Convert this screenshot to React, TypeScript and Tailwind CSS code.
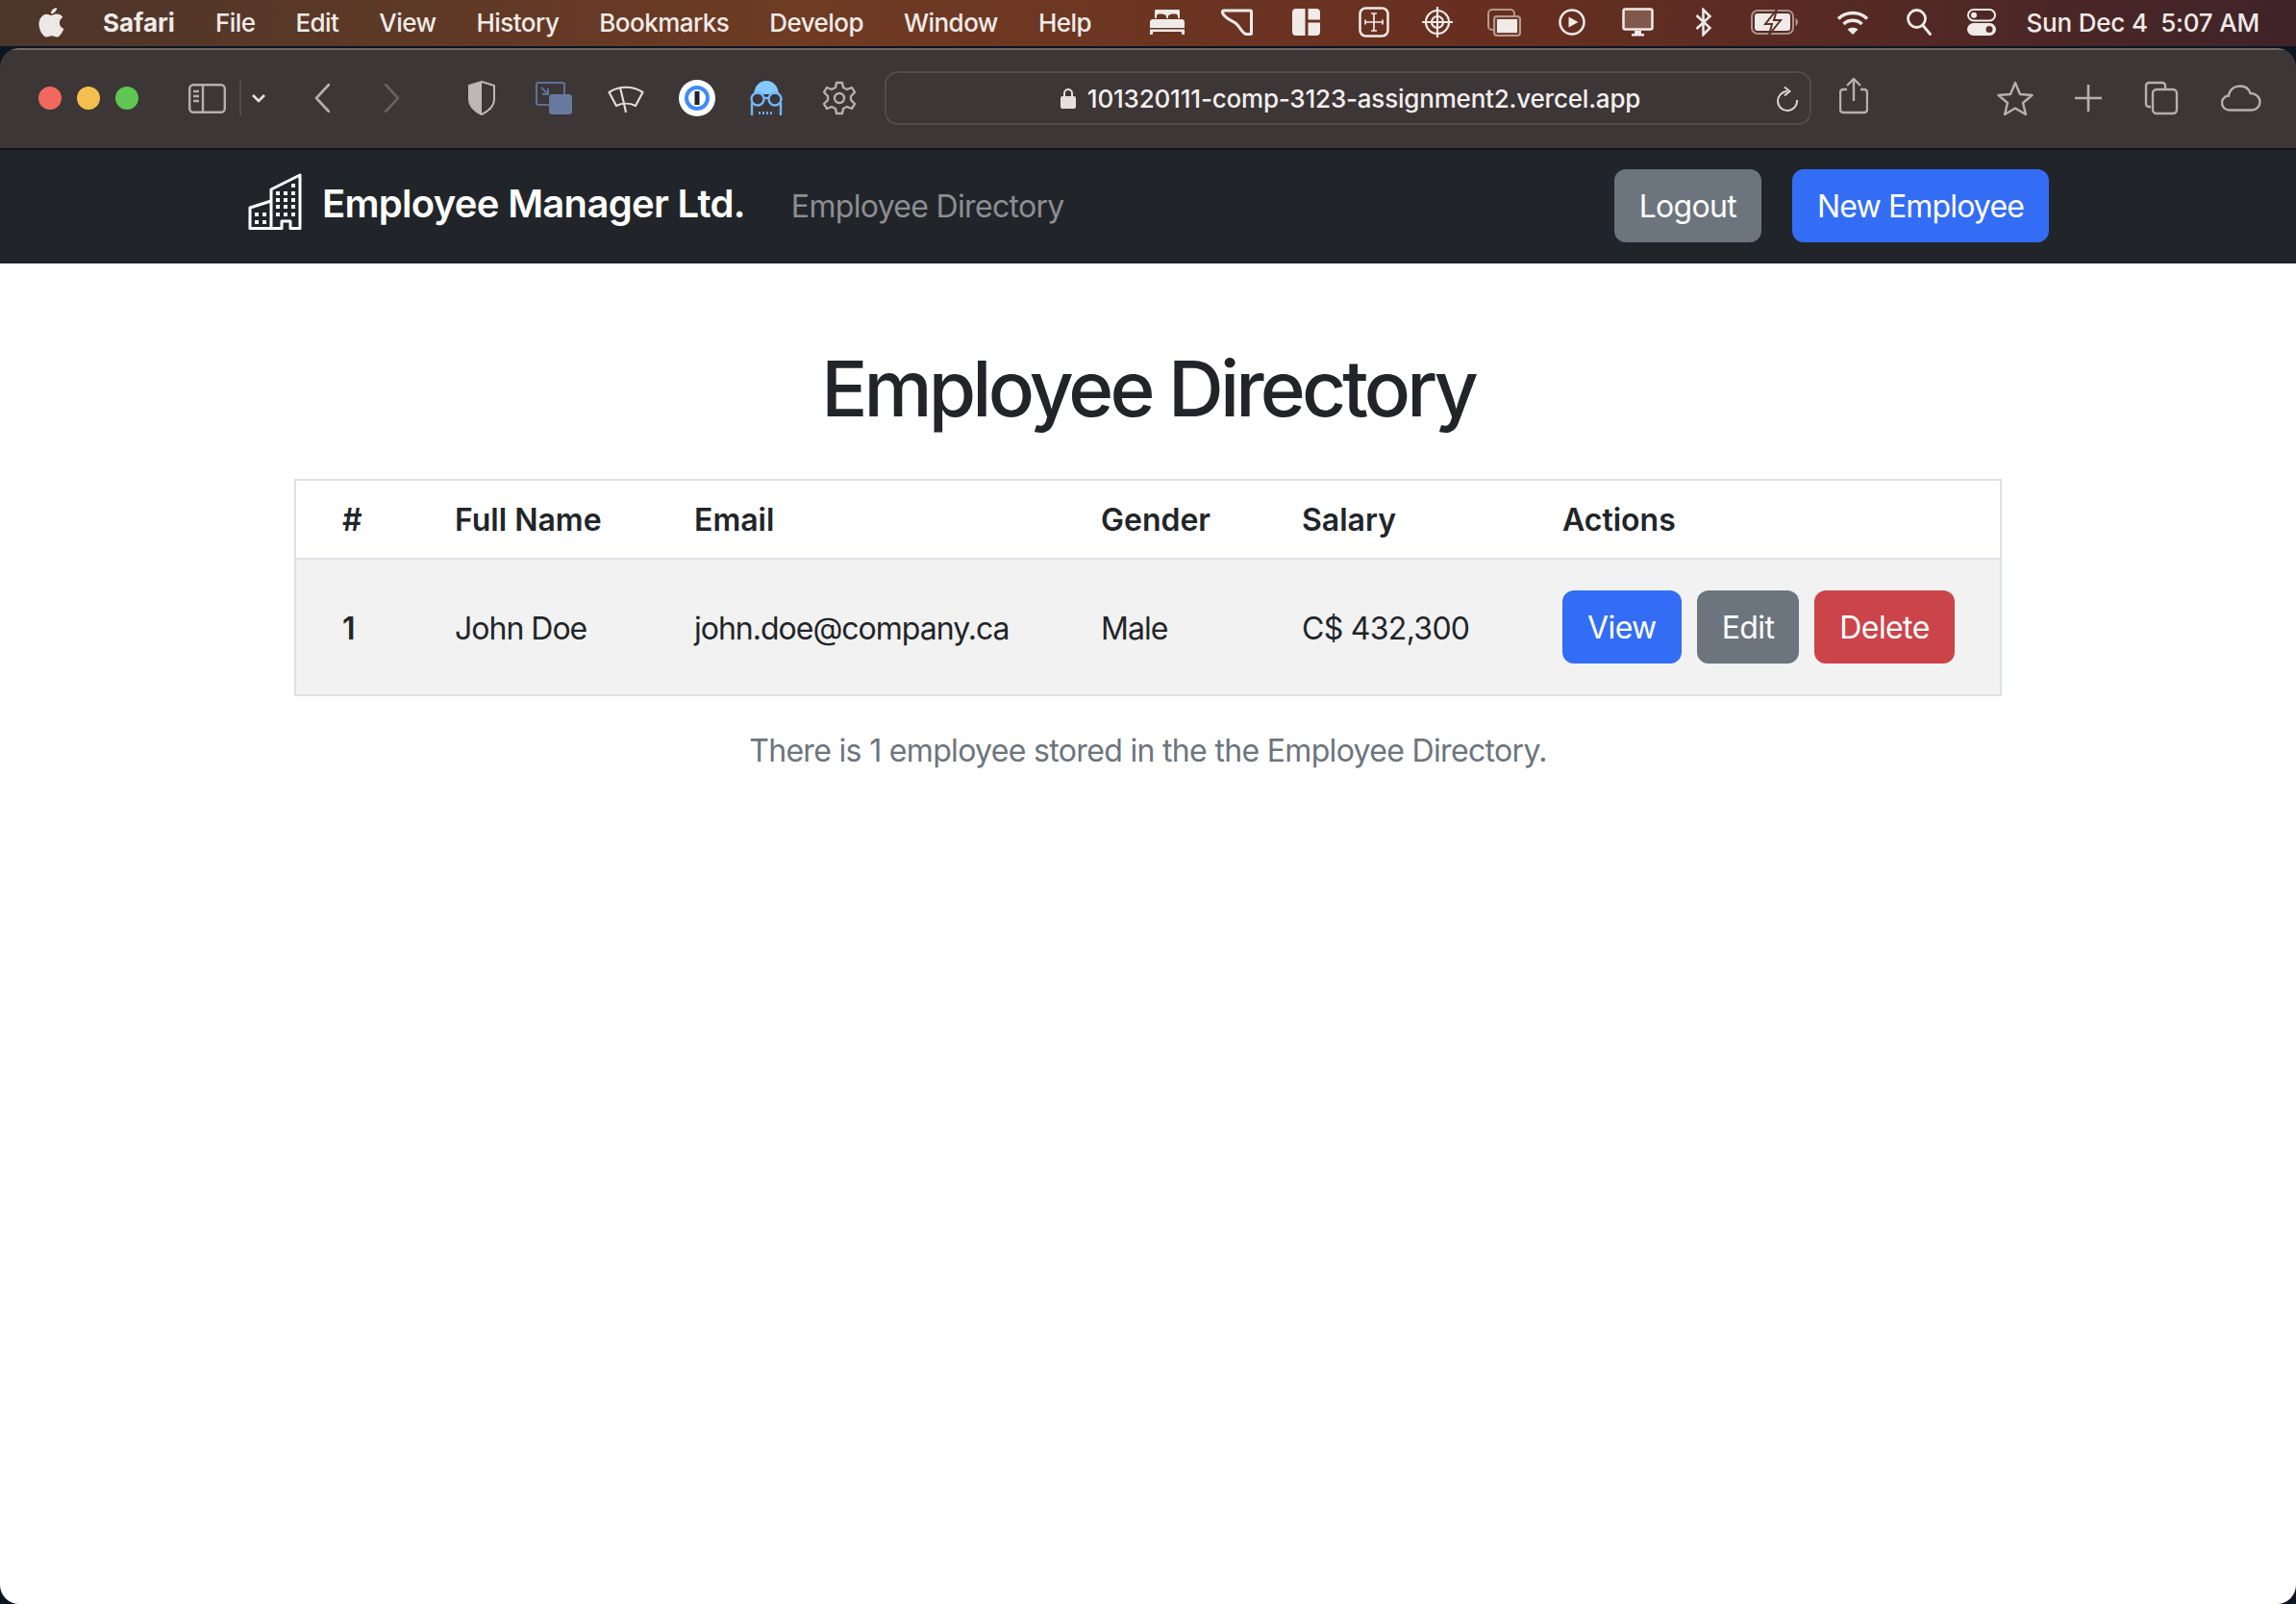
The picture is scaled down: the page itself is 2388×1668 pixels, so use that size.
const menuItems = ["File", "Edit", "View", "History", "Bookmarks", "Develop", "Window", "Help"];

function MenuBar() {
  return (
    <div className="flex h-[48px] shrink-0 items-center bg-[linear-gradient(90deg,#4c362a_0%,#6f3b23_35%,#682f20_65%,#3f2329_100%)] pb-[2px] pl-[40px] pr-[38px] text-[26px] text-[#f0ebe8]">
      <svg viewBox="0 0 27 32" className="h-[32px] w-[27px] shrink-0" fill="#ece8e6">
        <path d="M19 1c.3 3-2.6 6.500-6 6.300C12.700 4.200 15.800 1.200 19 1zM13.200 8.900c1.500 0 3-1.400 5.800-1.400 2.500 0 5 1.200 6.400 3.400-5.200 3-4.300 10 1 12-1.300 3.500-4.300 8.600-7.300 8.600-2 0-3-1.300-5.300-1.300s-3.600 1.300-5.400 1.300C4.700 31.500.5 24 .5 18.200.500 12 4.500 7.800 8.400 7.800c2 0 3.500 1.100 4.800 1.100z" />
      </svg>
      <span className="ml-[40px] font-bold">Safari</span>
      <div className="ml-[42px] flex gap-[42px] font-medium tracking-[-0.55px]">
        {menuItems.map((m) => (
          <span key={m}>{m}</span>
        ))}
      </div>
      <div className="ml-auto flex items-center">
        <div className="flex w-[40px] justify-center">
          <svg viewBox="0 0 36 26" className="h-[26px] w-[36px]" fill="#f0ebe8">
            <path d="M5 1.500C5 .7 5.700 0 6.500 0h23c.8 0 1.500.7 1.500 1.500V9h-2V6.500C29 5 27.500 4.500 25 4.500s-5 .5-6 2V9h-2V6.500c-1-1.500-3.500-2-6-2S7 5 7 6.500V9H5z" />
            <path d="M3 10h30c1.700 0 3 1.300 3 3v6H0v-6c0-1.700 1.300-3 3-3zM0 20.500h36V26h-2.500l-1-3h-29l-1 3H0z" />
          </svg>
        </div>
        <div className="ml-[33px] flex w-[40px] justify-center">
          <svg viewBox="0 0 33 28" className="h-[28px] w-[33px]" fill="none" stroke="#f0ebe8" strokeWidth="3" strokeLinejoin="round">
            <path d="M3 2h27.500a1 1 0 0 1 1 1v22.500a1 1 0 0 1-1 1H26C22 26 20 19 15 15 11 12 5 11 1.500 4.500 1 3 2 2 3 2z" />
          </svg>
        </div>
        <div className="ml-[32px] flex w-[40px] justify-center">
          <svg viewBox="0 0 29 28" className="h-[28px] w-[29px]" fill="#f0ebe8">
            <path d="M4 0h9.500v28H4a4 4 0 0 1-4-4V4a4 4 0 0 1 4-4zM16.500 0H25a4 4 0 0 1 4 4v7.500H16.500zM16.500 14.500H29V24a4 4 0 0 1-4 4h-8.500z" />
          </svg>
        </div>
        <div className="ml-[30px] flex w-[40px] justify-center">
          <svg viewBox="0 0 32 32" className="h-[32px] w-[32px]" fill="none" stroke="#f0ebe8">
            <rect x="1.500" y="1.500" width="29" height="29" rx="6" strokeWidth="2.500" />
            <path d="M16 7v18M13 7h6M13 25h6M7 13.500v5M7 16h18M25 13.500v5" strokeWidth="1.700" />
          </svg>
        </div>
        <div className="ml-[26px] flex w-[40px] justify-center">
          <svg viewBox="0 0 32 32" className="h-[32px] w-[32px]" fill="none" stroke="#f0ebe8" strokeWidth="2.200">
            <circle cx="16" cy="16" r="12" />
            <circle cx="16" cy="16" r="6" />
            <path d="M16 0v32M0 16h32" />
          </svg>
        </div>
        <div className="ml-[30px] flex w-[40px] justify-center">
          <svg viewBox="0 0 35 29" className="h-[29px] w-[35px]" fill="none">
            <rect x="1" y="1" width="27" height="21" rx="4" stroke="#b59a8f" strokeWidth="2" />
            <rect x="7" y="8" width="27" height="20" rx="3" fill="#704030" stroke="#b59a8f" strokeWidth="2" />
            <rect x="10" y="11" width="21" height="14" fill="#f0ebe8" />
          </svg>
        </div>
        <div className="ml-[30px] flex w-[40px] justify-center">
          <svg viewBox="0 0 28 28" className="h-[28px] w-[28px]">
            <circle cx="14" cy="14" r="12.500" fill="none" stroke="#f0ebe8" strokeWidth="2.500" />
            <path d="M10.500 8.500 20.500 14l-10 5.500z" fill="#f0ebe8" />
          </svg>
        </div>
        <div className="ml-[29px] flex w-[40px] justify-center">
          <svg viewBox="0 0 33 30" className="h-[30px] w-[33px]">
            <rect x="1.500" y="1.500" width="30" height="21" rx="2" fill="#80594c" stroke="#f0ebe8" strokeWidth="2.500" />
            <path d="M13 24h7v3h3v2.500H10V27h3z" fill="#f0ebe8" />
          </svg>
        </div>
        <div className="ml-[28px] flex w-[40px] justify-center">
          <svg viewBox="0 0 18 30" className="h-[30px] w-[18px]" fill="none" stroke="#f0ebe8" strokeWidth="2.500">
            <path d="M1.500 8 15.500 21 8.500 28V2l7 7L1.500 22" />
          </svg>
        </div>
        <div className="ml-[34px] flex w-[40px] justify-center">
          <svg viewBox="0 0 50 26" className="h-[26px] w-[50px] shrink-0">
            <rect x="1" y="1" width="43" height="24" rx="6" fill="none" stroke="#ad9288" strokeWidth="2" />
            <path d="M46.500 9c1.500.5 2.500 2 2.500 4s-1 3.500-2.500 4z" fill="#ad9288" />
            <rect x="4" y="4" width="37" height="18" rx="3" fill="#f0ebe8" />
            <path d="M27 0 15 15h7l-3 11 12-15h-7z" fill="#f0ebe8" stroke="#5a2f26" strokeWidth="2" />
          </svg>
        </div>
        <div className="ml-[41px] flex w-[40px] justify-center">
          <svg viewBox="0 0 34 26" className="h-[26px] w-[34px]" fill="none" stroke="#f0ebe8" strokeWidth="3.500">
            <path d="M2 9.500C10 1.500 24 1.500 32 9.500" />
            <path d="M7.500 15c5-5 14-5 19 0" />
            <path d="M17 26l-5.500-5.500c3-2.500 8-2.500 11 0z" fill="#f0ebe8" stroke="none" />
          </svg>
        </div>
        <div className="ml-[29px] flex w-[40px] justify-center">
          <svg viewBox="0 0 26 28" className="h-[28px] w-[26px]" fill="none" stroke="#f0ebe8" strokeWidth="2.800" strokeLinecap="round">
            <circle cx="10.500" cy="10.500" r="9" />
            <path d="M17 17.500l7.500 9" />
          </svg>
        </div>
        <div className="ml-[25px] flex w-[40px] justify-center">
          <svg viewBox="0 0 30 28" className="h-[28px] w-[30px]">
            <rect x="1" y="1" width="28" height="11.500" rx="5.700" fill="none" stroke="#f0ebe8" strokeWidth="2" />
            <circle cx="7" cy="6.700" r="3" fill="#f0ebe8" />
            <rect y="15" width="30" height="13" rx="6.500" fill="#f0ebe8" />
            <circle cx="23" cy="21.500" r="3.500" fill="#5a2f26" />
          </svg>
        </div>
        <span className="ml-[27px] whitespace-pre font-medium tracking-[-0.2px]">Sun Dec 4  5:07 AM</span>
      </div>
    </div>
  );
}

function Toolbar() {
  return (
    <div className="flex h-[106px] shrink-0 items-center border-b-2 border-t-2 border-t-[#6e6967] border-b-[#141416] bg-[#3c3636] pb-[2px] pl-[40px]">
      <div className="h-[24px] w-[24px] shrink-0 rounded-full bg-[#f1695e]" />
      <div className="ml-[16px] h-[24px] w-[24px] shrink-0 rounded-full bg-[#f5bf4f]" />
      <div className="ml-[16px] h-[24px] w-[24px] shrink-0 rounded-full bg-[#5fc653]" />
      <svg viewBox="0 0 39 31" className="ml-[52px] h-[31px] w-[39px] shrink-0" fill="none" stroke="#b5b0ae" strokeWidth="2.400">
        <rect x="1.200" y="1.200" width="36.600" height="28.600" rx="4" />
        <path d="M15 1.200v28.600M5 8h6M5 13h6M5 18h6" />
      </svg>
      <div className="ml-[14px] h-[36px] w-[2px] shrink-0 bg-[#524d4b]" />
      <svg viewBox="0 0 14 9" className="ml-[11px] h-[9px] w-[14px] shrink-0" fill="none" stroke="#e6e2e0" strokeWidth="2.600">
        <path d="M1 1l6 6 6-6" />
      </svg>
      <svg viewBox="0 0 16 30" className="ml-[51px] h-[30px] w-[16px] shrink-0" fill="none" stroke="#b5b0ae" strokeWidth="2.600" strokeLinecap="round">
        <path d="M15 1 2 15l13 14" />
      </svg>
      <svg viewBox="0 0 16 30" className="ml-[57px] h-[30px] w-[16px] shrink-0" fill="none" stroke="#67625f" strokeWidth="2.600" strokeLinecap="round">
        <path d="M1 1l13 14L1 29" />
      </svg>
      <svg viewBox="0 0 28 36" className="ml-[71px] h-[36px] w-[28px] shrink-0">
        <path d="M14 1 27 5v14c0 7-6 13-13 16C7 32 1 26 1 19V5z" fill="none" stroke="#bdb7b5" strokeWidth="2" />
        <path d="M14 1 1 5v14c0 7 6 13 13 16z" fill="#bdb7b5" />
      </svg>
      <svg viewBox="0 0 38 34" className="ml-[42px] h-[34px] w-[38px] shrink-0">
        <rect x="1" y="1" width="29" height="23" rx="2" fill="none" stroke="#5e7299" strokeWidth="2" />
        <path d="M6 6l7 7M7 13h6V7" stroke="#5e7299" strokeWidth="2" fill="none" />
        <rect x="14" y="13" width="24" height="21" rx="3" fill="#68799f" />
      </svg>
      <svg viewBox="0 0 38 32" className="ml-[37px] h-[32px] w-[38px] shrink-0" fill="none" stroke="#dfdbd9" strokeWidth="2.200" strokeLinejoin="round">
        <path d="M1.500 10C12 3 26 3 36.500 10L29 24C23 21 15 21 9 24z" />
        <path d="M13 5l5 21 1 5" />
      </svg>
      <svg viewBox="0 0 38 38" className="ml-[36px] h-[38px] w-[38px] shrink-0">
        <circle cx="19" cy="19" r="19" fill="#ffffff" />
        <circle cx="19" cy="19" r="13" fill="#3f8cf6" />
        <circle cx="19" cy="19" r="9" fill="#ffffff" />
        <rect x="16.500" y="12" width="5" height="14" fill="#1e2230" />
      </svg>
      <svg viewBox="0 0 36 38" className="ml-[35px] h-[38px] w-[36px] shrink-0">
        <path d="M5 15C6 6 11 1 18 1s12 5 13 14z" fill="#84c8ff" />
        <g fill="none" stroke="#6fb8ff" strokeWidth="2.400">
          <circle cx="9" cy="20" r="6.500" />
          <circle cx="27" cy="20" r="6.500" />
          <path d="M15 19h6M3 24v13M33 24v13" />
          <path d="M11 33v3M15 33v3M19 33v3M23 33v3" strokeWidth="1.800" />
        </g>
      </svg>
      <svg viewBox="0 0 36 36" className="ml-[40px] h-[36px] w-[36px] shrink-0" fill="none" stroke="#b5b0ae" strokeWidth="2.400" strokeLinejoin="round">
        <circle cx="18" cy="18" r="5" />
        <path d="M15 2h6l1 5 4 2 5-2 3 5-4 4v4l4 4-3 5-5-2-4 2-1 5h-6l-1-5-4-2-5 2-3-5 4-4v-4l-4-4 3-5 5 2 4-2z" />
      </svg>
      <div className="ml-[29px] flex h-[56px] w-[964px] shrink-0 items-center rounded-[14px] border-2 border-[#514c4a] pr-[12px]">
        <div className="flex flex-1 items-center justify-center pl-[39px]">
          <svg viewBox="0 0 16 22" className="h-[22px] w-[16px] shrink-0" fill="#e4e0de">
            <path d="M3 9V6a5 5 0 0 1 10 0v3h1a2 2 0 0 1 2 2v9a2 2 0 0 1-2 2H2a2 2 0 0 1-2-2v-9a2 2 0 0 1 2-2zm2 0h6V6a3 3 0 0 0-6 0z" />
          </svg>
          <span className="ml-[12px] text-[26px] font-medium tracking-[-0.2px] text-[#f2efee]">101320111-comp-3123-assignment2.vercel.app</span>
        </div>
        <svg viewBox="0 0 22 28" className="h-[28px] w-[22px] shrink-0" fill="none" stroke="#d8d4d2" strokeWidth="2">
          <path d="M11 7A10 10 0 1 0 21 16" />
          <path d="M8 2.500 13.500 7 8 11.500" />
        </svg>
      </div>
      <svg viewBox="0 0 30 38" className="ml-[29px] h-[38px] w-[30px] shrink-0 -translate-y-[2px]" fill="none" stroke="#b5b0ae" strokeWidth="2.400">
        <path d="M8 12H4a3 3 0 0 0-3 3v18a3 3 0 0 0 3 3h22a3 3 0 0 0 3-3V15a3 3 0 0 0-3-3h-4M15 24V2M8 8l7-7 7 7" />
      </svg>
      <svg viewBox="0 0 38 36" className="ml-[134px] h-[36px] w-[38px] shrink-0" fill="none" stroke="#b5b0ae" strokeWidth="2.400" strokeLinejoin="round">
        <path d="M19 2l5 12 12.500 1-9.500 8 3 12L19 28.500 8 35l3-12-9.500-8L14 14z" />
      </svg>
      <svg viewBox="0 0 28 28" className="ml-[43px] h-[28px] w-[28px] shrink-0" fill="none" stroke="#b5b0ae" strokeWidth="2.600">
        <path d="M14 0v28M0 14h28" />
      </svg>
      <svg viewBox="0 0 36 36" className="ml-[44px] h-[36px] w-[36px] shrink-0" fill="none" stroke="#b5b0ae" strokeWidth="2.400">
        <path d="M7 27H5a3 3 0 0 1-3-3V5a3 3 0 0 1 3-3h14a3 3 0 0 1 3 3v3" />
        <rect x="9" y="9" width="25" height="25" rx="4" />
      </svg>
      <svg viewBox="0 0 42 28" className="ml-[44px] h-[28px] w-[42px] shrink-0" fill="none" stroke="#b5b0ae" strokeWidth="2.400">
        <path d="M9 26.500a7.500 7.500 0 0 1-1-15C9 5 14 1.500 20 1.500c5 0 9 3 10.500 7.500 5.500 0 10 4 10 9 0 4.500-3.500 8.500-8.500 8.500z" />
      </svg>
    </div>
  );
}

function NavBar() {
  return (
    <nav className="flex h-[118px] shrink-0 items-center bg-[#212529] pb-[2px] pl-[258px] pr-[257px]">
      <svg viewBox="0 0 56 59" className="h-[59px] w-[56px] shrink-0 -translate-y-[5px]" fill="none">
        <path d="M2 57.500V36l22-7V17L54 2v55.500H44V50h-9v7.500zM24 29v28.500" stroke="#ffffff" strokeWidth="3" strokeLinejoin="round" />
        <g fill="#ffffff">
          <rect x="45" y="11" width="4" height="4" />
          <rect x="29" y="19" width="4" height="4" />
          <rect x="37" y="19" width="4" height="4" />
          <rect x="45" y="19" width="4" height="4" />
          <rect x="29" y="26" width="4" height="4" />
          <rect x="37" y="26" width="4" height="4" />
          <rect x="45" y="26" width="4" height="4" />
          <rect x="29" y="33" width="4" height="4" />
          <rect x="37" y="33" width="4" height="4" />
          <rect x="45" y="33" width="4" height="4" />
          <rect x="29" y="41" width="4" height="4" />
          <rect x="37" y="41" width="4" height="4" />
          <rect x="45" y="41" width="4" height="4" />
          <rect x="7" y="41" width="4" height="4" />
          <rect x="15" y="41" width="4" height="4" />
          <rect x="7" y="49" width="4" height="4" />
          <rect x="15" y="49" width="4" height="4" />
        </g>
      </svg>
      <span className="ml-[21px] -translate-y-[2px] text-[40px] font-semibold tracking-[-0.7px] text-white">Employee Manager Ltd.</span>
      <span className="ml-[48px] translate-y-[1px] text-[32px] tracking-[-0.68px] text-[#8c8e91]">Employee Directory</span>
      <div className="ml-auto flex gap-[32px]">
        <button className="h-[76px] rounded-[12px] bg-[#6c757d] px-[26px] pt-[2px] text-[32px] tracking-[-0.7px] text-white">Logout</button>
        <button className="h-[76px] rounded-[12px] bg-[#336df5] px-[26px] pt-[2px] text-[32px] tracking-[-0.85px] text-white">New Employee</button>
      </div>
    </nav>
  );
}

function EmployeeTable() {
  return (
    <table className="w-[1776px] table-fixed border-collapse border-2 border-[#dee2e6] text-left text-[32px] text-[#212529]">
      <thead>
        <tr className="h-[82px] border-b-2 border-[#dee2e6] font-semibold">
          <th className="w-[118px] pl-[48px] pt-[2px] font-semibold">#</th>
          <th className="w-[249px] pl-[48px] pt-[2px] font-semibold">Full Name</th>
          <th className="w-[423px] pl-[48px] pt-[2px] font-semibold">Email</th>
          <th className="w-[209px] pl-[48px] pt-[2px] font-semibold">Gender</th>
          <th className="w-[271px] pl-[48px] pt-[2px] font-semibold">Salary</th>
          <th className="pl-[48px] pt-[2px] font-semibold">Actions</th>
        </tr>
      </thead>
      <tbody>
        <tr className="h-[142px] bg-[#f2f2f2]">
          <td className="pl-[48px] pt-[3px] font-semibold">1</td>
          <td className="pl-[48px] pt-[3px] tracking-[-1px]">John Doe</td>
          <td className="pl-[48px] pt-[3px] tracking-[-1px]">john.doe@company.ca</td>
          <td className="pl-[48px] pt-[3px] tracking-[-1px]">Male</td>
          <td className="pl-[48px] pt-[3px] tracking-[-0.7px]">C$ 432,300</td>
          <td className="pl-[48px]">
            <div className="flex gap-[16px] tracking-[-0.6px]">
              <button className="h-[76px] rounded-[12px] bg-[#336df5] px-[26px] pt-[1px] text-white">View</button>
              <button className="h-[76px] rounded-[12px] bg-[#6c757d] px-[26px] pt-[1px] text-white">Edit</button>
              <button className="h-[76px] rounded-[12px] bg-[#cb444a] px-[26px] pt-[1px] text-white">Delete</button>
            </div>
          </td>
        </tr>
      </tbody>
    </table>
  );
}

export default function App() {
  return (
    <div className="flex h-[1668px] w-[2388px] flex-col overflow-hidden bg-[#0b1522] font-['Inter',sans-serif] antialiased">
      <MenuBar />
      <div className="mt-[2px] flex flex-1 flex-col overflow-hidden rounded-[20px]">
        <Toolbar />
        <NavBar />
        <main className="flex flex-1 flex-col items-center bg-white">
          <h1 className="mt-[82px] text-[80px] font-medium leading-[96px] tracking-[-3.85px] text-[#212529]">Employee Directory</h1>
          <div className="mt-[46px]">
            <EmployeeTable />
          </div>
          <p className="mt-[33px] text-[32px] leading-[48px] tracking-[-0.67px] text-[#6c757d]">There is 1 employee stored in the the Employee Directory.</p>
        </main>
      </div>
    </div>
  );
}
